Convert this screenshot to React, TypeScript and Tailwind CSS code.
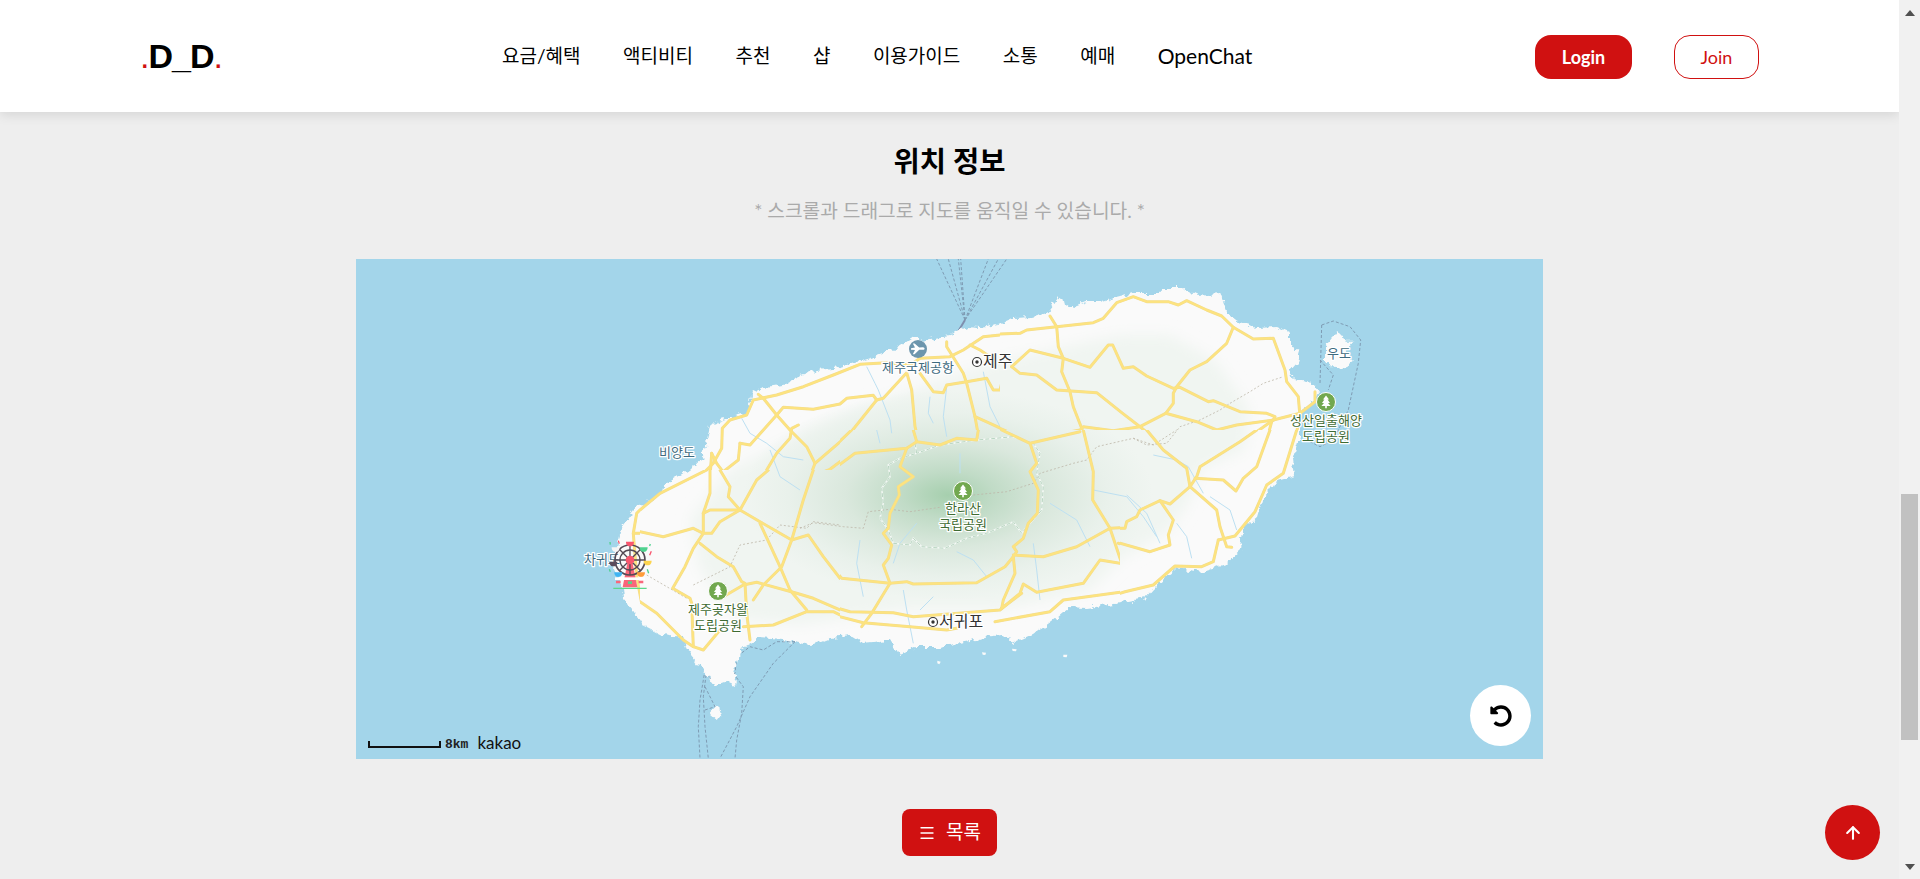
import { ArrowUp, Menu } from "lucide-react";
import { FaUndoAlt } from "react-icons/fa";

const NAV = ["요금/혜택", "액티비티", "추천", "샵", "이용가이드", "소통", "예매"];

// map strokes were read off 3x crops, so each set keeps its crop origin
type Trace = [number, number, string];

const path = ([ox, oy, pts]: Trace, close = false) =>
  "M" +
  pts
    .split(" ")
    .map((p) => {
      const [x, y] = p.split(",").map(Number);
      return `${(ox + x / 3).toFixed(1)} ${(oy + y / 3).toFixed(1)}`;
    })
    .join("L") +
  (close ? "Z" : "");

const ISLAND =
  "M660 495L667 483L683 473L702 460L707 440L710 425L722 420L747 413L752 393L763 387L783 385L797 378L817 370L840 367L870 358L893 350L913 337L923 340L950 335L967 327L980 328L997 325L1013 318L1033 317L1047 313L1058 298L1072 308L1087 302L1100 302L1117 297L1133 293L1160 293L1163 287L1180 287L1197 295L1220 293L1227 313L1240 323L1257 328L1277 327L1290 333L1290 347L1300 350L1298 363L1290 372L1293 380L1302 382L1315 385L1320 392L1312 403L1300 413L1300 437L1293 460L1295 477L1273 483L1263 500L1258 517L1243 530L1241 550L1225 565L1203 572L1176 568L1154 588L1145 598L1109 605L1087 608L1069 607L1051 622L1033 635L1015 643L1002 635L984 637L975 640L939 647L917 647L899 655L890 640L863 643L850 635L830 637L810 645L783 640L760 638L740 650L733 673L737 683L727 680L713 685L703 670L687 650L683 638L663 635L643 625L633 610L623 598L622 587L613 567L620 533L625 523L637 507L647 502Z";

const ISLETS: Trace[] = [
  [1000, 250, "1015,240 1040,275 1060,275 1040,300 1055,330 1040,355 1000,350 975,330 975,290 995,265"],
  [350, 500, "1095,622 1115,640 1100,660 1078,640"],
  [350, 500, "1140,530 1160,540 1155,558 1138,550"],
  [800, 430, "412,692 422,695 418,703 412,700"],
  [800, 430, "546,667 558,668 556,675 548,674"],
  [800, 430, "636,656 650,658 648,664 638,663"],
  [800, 430, "790,674 802,674 800,682 790,681"],
];

const ROADS: Trace[] = [
  [350, 500, "910,0 880,20 860,40 850,100 860,230 875,310 920,340 1000,415"],
  [350, 500, "850,100 900,100 940,112"],
  [550, 250, "310,750 350,715 450,680 490,640 515,595 517,535 540,510 590,495 610,450 680,435 760,410 850,375 930,343 1010,338 1080,345 1110,325 1200,320 1240,300 1300,260 1400,250 1500,232"],
  [550, 250, "625,433 640,445 680,495 720,540 770,590 795,640 780,680 765,750"],
  [550, 250, "680,495 700,472 790,478 870,462 890,445 970,436 980,450 1000,445 1070,368 1085,420 1095,530 1105,570 1070,600 950,600 890,620 840,658 780,682"],
  [550, 250, "980,450 900,550 795,640"],
  [550, 250, "1105,570 1130,568 1175,582 1220,562 1265,572 1285,555 1275,500 1250,400 1240,370 1190,290 1190,275"],
  [550, 250, "1110,370 1150,425 1180,428 1190,405 1250,395 1310,385 1330,420 1350,420 1365,360 1385,350 1440,300 1500,310"],
  [550, 250, "1260,285 1290,300 1320,320"],
  [550, 250, "1275,500 1320,520 1380,548 1445,580 1500,570"],
  [550, 250, "745,525 725,535 720,565 680,610 620,710 590,750"],
  [550, 250, "570,580 600,585 680,495"],
  [550, 250, "570,580 565,630 520,665"],
  [550, 250, "485,610 480,680 480,730 465,750"],
  [550, 250, "485,610 500,640 530,680 540,750"],
  [1000, 250, "0,252 60,250 80,240 170,230 280,218 310,205 350,158 400,140 440,155 505,155 535,165 560,152 620,180 665,198 700,232 760,267 820,265 855,360 860,395 895,440 900,500 880,590 850,650 825,690 790,740 780,760"],
  [1000, 250, "150,198 170,230 175,290 190,325 185,365 210,425 220,470 245,535 280,670 275,750"],
  [1000, 250, "35,350 90,300 190,325 270,352 325,285 338,285 370,355 400,350 440,378 520,415 540,412 625,455 640,452 720,485 800,490 825,500 820,510"],
  [1000, 250, "700,232 680,280 620,335 570,360 530,410 520,430 520,460 497,490 420,530 340,542 250,530 240,540 160,555 95,578 30,548 0,535"],
  [1000, 250, "35,350 60,370 110,375 170,420 290,428 365,488 420,530 480,580 560,650 565,700 575,715 630,750"],
  [1000, 250, "497,490 590,515 650,540 710,525 820,510 900,490 945,455 945,425"],
  [1000, 250, "820,510 700,595 600,660 590,680 575,715"],
  [1000, 250, "590,680 670,690 705,720 730,685 760,670 800,570 815,515"],
  [800, 430, "0,30 30,70 45,105 30,145 0,240"],
  [800, 430, "45,105 155,0"],
  [800, 430, "35,145 100,118 165,70 320,55 350,35 340,0"],
  [800, 430, "350,35 420,45 470,25 530,30 535,0"],
  [800, 430, "605,0 690,40 840,5"],
  [800, 430, "690,40 710,100 690,125 715,180 712,250 685,280 670,325 640,350 650,365 640,380"],
  [800, 430, "320,55 300,110 340,140 295,170 298,195 270,250 265,295 250,310 275,345 265,385 250,405 270,460"],
  [800, 430, "0,318 20,318 125,445 270,460 320,455 340,462 530,458 615,410 640,380 645,430 610,510 605,535"],
  [800, 430, "640,375 730,380 830,350 930,295 975,292 1020,240 1080,212 1100,230 1170,175 1165,110 1130,70 1070,30 1030,0"],
  [800, 430, "850,0 880,125 878,210 930,295 965,400 980,480"],
  [800, 430, "270,460 215,550 185,590"],
  [800, 430, "0,490 80,525 150,545 280,548 340,560 600,540 660,490 670,462 710,487 850,460 900,390 960,400"],
  [800, 430, "0,505 20,545 100,555 190,578 330,590 440,600 470,595"],
  [800, 430, "585,575 750,545 790,510 970,485 1060,465 1130,408 1200,410"],
  [800, 430, "955,340 1050,368 1110,345 1105,310 1120,270 1100,230"],
  [800, 430, "605,535 665,490"],
  [1120, 430, "80,0 130,60 200,115 210,170 290,240 300,290 320,350 335,352"],
  [1120, 430, "210,170 230,140 240,110 360,35 410,0"],
  [1120, 430, "225,145 310,150 348,183 370,145 410,110 450,0"],
  [1120, 430, "295,330 345,318 405,245 440,165 490,130 530,0"],
  [1120, 430, "295,330 280,395 245,410 165,408 100,465 15,485 0,490"],
  [1120, 430, "210,170 150,222 120,212 60,240 50,260 20,275 15,295 0,295"],
  [1120, 430, "120,212 160,270 145,315 150,345 90,365 0,340"],
  [640, 470, "0,120 60,70 200,0"],
  [640, 470, "210,0 210,70 190,130 190,190 160,235 135,290 98,355 150,385 155,400 160,530"],
  [640, 470, "190,130 210,120 300,120 350,30 385,0"],
  [640, 470, "240,0 270,50 265,80 300,120 360,155 420,190 455,210 505,195 550,260 600,325"],
  [640, 470, "300,120 240,155 215,190 190,190 160,175 70,200 0,185"],
  [640, 470, "180,220 230,260 280,290 305,335 315,340 320,430 330,510"],
  [640, 470, "360,160 420,290 450,360 500,420"],
  [640, 470, "520,0 490,90 455,210 425,290 370,345 340,390"],
  [640, 470, "250,380 310,345 350,337 470,370 520,385 600,420"],
  [640, 470, "0,395 50,430 130,510 160,530 190,540 240,480"],
  [640, 470, "310,470 400,465 500,425 580,425 600,435"],
];

// which part of the map each crop's road tracing is used for, so overlaps don't double up
const ROAD_CLIPS: Record<number, string> = {
  350: "M350 470H640V680H350Z",
  550: "M550 250H1000V430H840V470H550Z",
  1000: "M1000 250H1450V430H1000Z",
  800: "M840 430H1120V680H840Z",
  1120: "M1120 430H1320V640H1120Z",
  640: "M640 470H840V680H640Z",
};

const STREAMS: Trace[] = [
  [550, 250, "950,350 975,400 985,420 1020,510 1025,550"],
  [550, 250, "1140,440 1135,490 1150,520"],
  [550, 250, "1190,410 1180,500 1190,560"],
  [550, 250, "1300,365 1320,470 1350,530"],
  [550, 250, "575,505 600,550 650,580 700,620 760,630"],
  [550, 250, "660,600 690,680 750,720"],
  [800, 430, "230,0 240,40"],
  [800, 430, "480,70 480,130"],
  [800, 430, "350,280 300,340 280,400"],
  [800, 430, "180,330 170,400 190,500"],
  [800, 430, "470,365 520,390 560,440"],
  [800, 430, "750,220 830,270 870,350"],
  [800, 430, "880,180 980,200 1030,260 1070,320"],
  [800, 430, "700,340 710,420 720,510"],
  [800, 430, "400,500 360,540"],
  [800, 430, "310,480 320,540 340,640"],
  [1120, 430, "100,75 170,90 205,110 250,190"],
  [1120, 430, "270,200 330,240 350,300"],
  [1120, 430, "170,280 200,320 215,385"],
  [1120, 430, "20,195 80,250 120,340"],
];

const HALLA_TRAIL: Trace[] = [
  [800, 430, "345,40 350,70 300,85 265,105 270,140 245,175 250,220 240,265 265,300 280,340 330,345 340,325 365,350 435,355 500,325 560,310 640,275 665,310 690,280 725,240 730,170 710,130 720,70 700,40 640,20 530,30 420,45 350,70"],
];

const BOUNDARY: Trace[] = [
  [800, 430, "0,295 40,278 130,290 190,295 205,245 270,238 330,245 420,232"],
  [800, 430, "520,195 620,185 700,160 720,130 820,100 860,90 890,50 1000,25 1060,45 1130,0"],
  [1000, 250, "690,460 750,425 790,400 850,380"],
  [640, 470, "20,315 140,385"],
  [640, 470, "160,345 270,290 300,225 380,210 420,165 500,175 520,155 600,165"],
  [1000, 250, "400,565 440,585 500,580 540,530 600,510 660,480 690,460"],
];

const FERRIES: Trace[] = [
  [550, 250, "1245,210 1160,27"],
  [550, 250, "1245,210 1195,27"],
  [550, 250, "1245,210 1225,27"],
  [550, 250, "1245,210 1232,27"],
  [550, 250, "1245,210 1315,27"],
  [550, 250, "1245,210 1345,27"],
  [550, 250, "1245,210 1370,27"],
  [350, 500, "1335,425 1270,490 1200,590 1160,680 1110,775"],
  [350, 500, "1065,510 1050,600 1045,680 1050,775"],
  [350, 500, "1070,510 1060,590 1065,680 1075,775"],
  [350, 500, "1150,520 1180,560 1175,640 1160,720 1155,775"],
  [350, 500, "1065,560 1095,620 1065,630"],
  [350, 500, "1335,425 1280,425 1240,450 1200,440 1160,470 1155,520 1090,550 1065,510"],
  [1000, 250, "965,225 1000,213 1050,230 1082,270 1075,340 1045,480 1000,570 960,590 930,575"],
  [1000, 250, "965,225 960,400"],
  [1000, 250, "960,330 1000,375 985,420"],
];

const LABEL_FONT = { fontFamily: '"Noto Sans CJK KR", sans-serif' };

function MapLabel({ x, y, fill, size = 13, anchor = "middle", lines }: { x: number; y: number; fill: string; size?: number; anchor?: "middle" | "start"; lines: string[] }) {
  return (
    <text x={x} y={y} fill={fill} fontSize={size} textAnchor={anchor} stroke="#ffffff" strokeWidth={2.5} paintOrder="stroke" strokeLinejoin="round" style={LABEL_FONT}>
      {lines.map((line, i) => (
        <tspan key={line} x={x} dy={i ? 15.5 : 0}>
          {line}
        </tspan>
      ))}
    </text>
  );
}

function ParkPin({ x, y }: { x: number; y: number }) {
  return (
    <g transform={`translate(${x} ${y})`}>
      <circle r={9.5} fill="#72a84f" stroke="#ffffff" strokeWidth={1} />
      <path d="M0 -6.5L3 -2.5H1.6L4 1H2L4.6 4H.8V6.2H-.8V4H-4.6L-2 1H-4L-1.6 -2.5H-3Z" fill="#ffffff" />
    </g>
  );
}

function CityDot({ x, y }: { x: number; y: number }) {
  return (
    <g>
      <circle cx={x} cy={y} r={4.5} fill="#ffffff" stroke="#333333" strokeWidth={1.2} />
      <circle cx={x} cy={y} r={1.7} fill="#333333" />
    </g>
  );
}

function FerrisWheel() {
  // drawn in the 3x crop's units
  const cabins = [
    [840, 130, "#f9566e"],
    [881, 147, "#4fd28f"],
    [893, 187, "#fdd44f"],
    [873, 222, "#ff9d3a"],
    [805, 222, "#3fb4f2"],
    [790, 190, "#5b4b5c"],
    [797, 147, "#f5f5f5"],
  ] as const;
  return (
    <g transform="translate(350 500) scale(0.3333)">
      <path d="M832 190L848 190L862 262H818Z" fill="#f9667a" />
      <path d="M795 236H885" stroke="#ffffff" strokeWidth={8} />
      <rect x={834} y={244} width={12} height={8} fill="#5bd28a" />
      <path d="M790 265H890" stroke="#5bd88a" strokeWidth={4} />
      <circle cx={840} cy={180} r={45} fill="none" stroke="#544a55" strokeWidth={5} />
      <circle cx={840} cy={180} r={30} fill="none" stroke="#544a55" strokeWidth={4} />
      <path d="M840 135V225M795 180H885M808 148L872 212M872 148L808 212" stroke="#544a55" strokeWidth={4} />
      <circle cx={840} cy={180} r={13} fill="#f9566e" />
      {cabins.map(([x, y, c]) => (
        <path key={`${x}-${y}`} d={`M${x - 12} ${y - 5}H${x + 12}C${x + 12} ${y + 6} ${x + 5} ${y + 9} ${x} ${y + 9}C${x - 5} ${y + 9} ${x - 12} ${y + 6} ${x - 12} ${y - 5}Z`} fill={c} />
      ))}
      <path d="M780 126L781 134M901 132L899 138M892 208L896 220M778 208L781 215" stroke="#4fd28f" strokeWidth={4} />
      <path d="M805 122L808 131M904 154L899 166" stroke="#f9566e" strokeWidth={4} />
      <path d="M798 242H812V250H798ZM866 242H880V250H866Z" fill="#f9667a" />
    </g>
  );
}

function JejuMap() {
  return (
    <svg viewBox="356 259 1187 500" className="block h-full w-full">
      <defs>
        <clipPath id="land">
          <path d={ISLAND} />
        </clipPath>
        {Object.entries(ROAD_CLIPS).map(([key, d]) => (
          <clipPath key={key} id={`roads-${key}`}>
            <path d={d} />
          </clipPath>
        ))}
        <filter id="soft" x="-10%" y="-10%" width="120%" height="120%">
          <feGaussianBlur stdDeviation="7" />
        </filter>
        <filter id="coast" x="-5%" y="-5%" width="110%" height="110%">
          <feTurbulence type="fractalNoise" baseFrequency="0.14" numOctaves="3" seed="4" />
          <feDisplacementMap in="SourceGraphic" scale="9" xChannelSelector="R" yChannelSelector="G" />
        </filter>
        <radialGradient id="halla">
          <stop offset="0%" stopColor="#a6cfae" />
          <stop offset="22%" stopColor="#c0dbc6" />
          <stop offset="50%" stopColor="#dae8dd" />
          <stop offset="78%" stopColor="#e9f1eb" />
          <stop offset="100%" stopColor="#e9f1eb" stopOpacity="0" />
        </radialGradient>
      </defs>

      <rect x={356} y={259} width={1187} height={500} fill="#a3d5ea" />

      {FERRIES.map((t, i) => (
        <path key={i} d={path(t)} fill="none" stroke="#7f9cb4" strokeWidth={1} strokeDasharray="3 2" />
      ))}
      <path d={path([550, 250, "1215,260 1245,210"])} fill="none" stroke="#7f8fae" strokeWidth={2} />

      <g filter="url(#coast)">
        <path d={ISLAND} fill="#fafafa" />
        {ISLETS.slice(0, 3).map((t, i) => (
          <path key={i} d={path(t, true)} fill="#fafafa" />
        ))}
      </g>
      {ISLETS.slice(3).map((t, i) => (
        <path key={i} d={path(t, true)} fill="#fafafa" />
      ))}

      <g clipPath="url(#land)">
        <path
          d="M690 520L730 470L790 440L880 400L1000 360L1120 335L1170 335L1215 360L1250 410L1245 450L1200 470L1190 500L1170 530L1120 560L1090 590L1000 610L900 610L800 625L740 620L700 570Z"
          fill="#f0f5f1"
          filter="url(#soft)"
        />
        <ellipse cx={948} cy={495} rx={205} ry={105} fill="url(#halla)" />
      </g>

      {STREAMS.map((t, i) => (
        <path key={i} d={path(t)} fill="none" stroke="#bde0f2" strokeWidth={1} />
      ))}
      {BOUNDARY.map((t, i) => (
        <path key={i} d={path(t)} fill="none" stroke="#bdb6a8" strokeWidth={0.8} strokeDasharray="2 2" />
      ))}
      {HALLA_TRAIL.map((t, i) => (
        <g key={i} fill="none">
          <path d={path(t)} stroke="#ffffff" strokeWidth={1.6} opacity={0.75} />
          <path d={path(t)} stroke="#b9d6c2" strokeWidth={1} strokeDasharray="4 2" />
        </g>
      ))}

      <g fill="none" strokeLinejoin="round" strokeLinecap="round">
        {ROADS.map((t, i) => (
          <path key={i} d={path(t)} clipPath={`url(#roads-${t[0]})`} stroke="#f1dc8f" strokeWidth={3} />
        ))}
        {ROADS.map((t, i) => (
          <path key={i} d={path(t)} clipPath={`url(#roads-${t[0]})`} stroke="#fde37f" strokeWidth={2} />
        ))}
      </g>

      <circle cx={918} cy={349} r={9} fill="#6d96ad" />
      <path d="M911 348.2L915 347.6L912.8 343.5H914.6L919.2 347.4L923 347.2C924.8 347.3 925.3 349.7 923 349.8L919.2 349.8L914.6 354.2H912.8L915 350L911 349.8Z" fill="#ffffff" />
      <ParkPin x={963} y={491} />
      <ParkPin x={1326} y={402} />
      <ParkPin x={718} y={591} />
      <CityDot x={977} y={362} />
      <CityDot x={933} y={622} />

      <MapLabel x={918} y={372} fill="#3f6b80" lines={["제주국제공항"]} />
      <MapLabel x={983} y={367} fill="#333333" size={16} anchor="start" lines={["제주"]} />
      <MapLabel x={939} y={627} fill="#333333" size={16} anchor="start" lines={["서귀포"]} />
      <MapLabel x={677} y={457} fill="#3f6b80" lines={["비양도"]} />
      <MapLabel x={1339} y={358} fill="#3f6b80" lines={["우도"]} />
      <MapLabel x={1326} y={425} fill="#3e6b33" lines={["성산일출해양", "도립공원"]} />
      <MapLabel x={963} y={513} fill="#3e6b33" lines={["한라산", "국립공원"]} />
      <MapLabel x={718} y={614} fill="#3e6b33" lines={["제주곶자왈", "도립공원"]} />
      <MapLabel x={602} y={564} fill="#3f6b80" lines={["차귀도"]} />

      <FerrisWheel />
    </svg>
  );
}

export default function App() {
  return (
    <div className="relative flex h-[879px] w-full overflow-hidden bg-[#eeeeee] font-['Lato','Noto_Sans_CJK_KR',sans-serif]">
      <div className="flex min-w-0 flex-1 flex-col">
        <header className="flex h-[112px] shrink-0 items-center bg-white pl-[140px] pr-[140px] shadow-[0_2px_12px_rgba(0,0,0,0.12)]">
          <a className="w-[362px] shrink-0 font-['Liberation_Sans',sans-serif] text-[34px] font-bold leading-none tracking-[-1px] text-black">
            <span className="font-normal text-[#d01111]">.</span>D_D<span className="font-normal text-[#d01111]">.</span>
          </a>
          <nav className="flex items-center gap-[42.5px] text-[19px] text-black">
            {NAV.map((item) => (
              <a key={item}>{item}</a>
            ))}
            <a className="text-[21px]">OpenChat</a>
          </nav>
          <div className="ml-auto mt-[2px] flex items-center gap-[42px]">
            <button className="h-[44px] w-[97px] rounded-[16px] bg-[#d01111] text-[18px] font-bold text-white">Login</button>
            <button className="h-[44px] w-[85px] rounded-[16px] border border-[#d01111] bg-white text-[18px] text-[#d01111]">Join</button>
          </div>
        </header>

        <main className="flex flex-col items-center">
          <h2 className="mt-[28px] h-[42px] text-[28.5px] font-bold leading-[42px] text-black">위치 정보</h2>
          <p className="mt-[15px] h-[28px] text-[19.2px] leading-[28px] text-[#aaaaaa]">* 스크롤과 드래그로 지도를 움직일 수 있습니다. *</p>

          <div className="relative mt-[34px] h-[500px] w-[1187px] overflow-hidden">
            <JejuMap />
            <div className="absolute bottom-[8px] left-[12px] flex items-end gap-[9px] leading-none">
              <div className="flex items-end gap-[4px]">
                <span className="mb-[3px] h-[7px] w-[73px] border-x-2 border-b-2 border-[#111111]" />
                <span className="font-['Liberation_Mono',monospace] text-[13px] font-bold text-[#222222]">8km</span>
              </div>
              <span className="text-[17px] leading-[17px] text-[#111111]">kakao</span>
            </div>
            <button className="absolute bottom-[13px] right-[12px] flex h-[61px] w-[61px] items-center justify-center rounded-full bg-white text-black">
              <FaUndoAlt size={22} />
            </button>
          </div>

          <button className="mt-[50px] flex h-[47px] w-[95px] items-center justify-center gap-[10px] rounded-[8px] bg-[#d01111] text-[19px] text-white">
            <Menu size={18} strokeWidth={1.75} />
            목록
          </button>
        </main>
      </div>

      <aside className="flex w-[21px] shrink-0 flex-col items-center bg-[#f1f1f1]">
        <svg width="10" height="6" viewBox="0 0 10 6" className="mt-[10px]">
          <path d="M5 0L10 6H0Z" fill="#505050" />
        </svg>
        <div className="mt-[478px] h-[246px] w-[17px] bg-[#c1c1c1]" />
        <svg width="10" height="6" viewBox="0 0 10 6" className="mt-[124px]">
          <path d="M5 6L10 0H0Z" fill="#505050" />
        </svg>
      </aside>

      <button className="absolute bottom-[19px] right-[40px] flex h-[55px] w-[55px] items-center justify-center rounded-full bg-[#d01111] text-white">
        <ArrowUp size={20} strokeWidth={2.5} />
      </button>
    </div>
  );
}
